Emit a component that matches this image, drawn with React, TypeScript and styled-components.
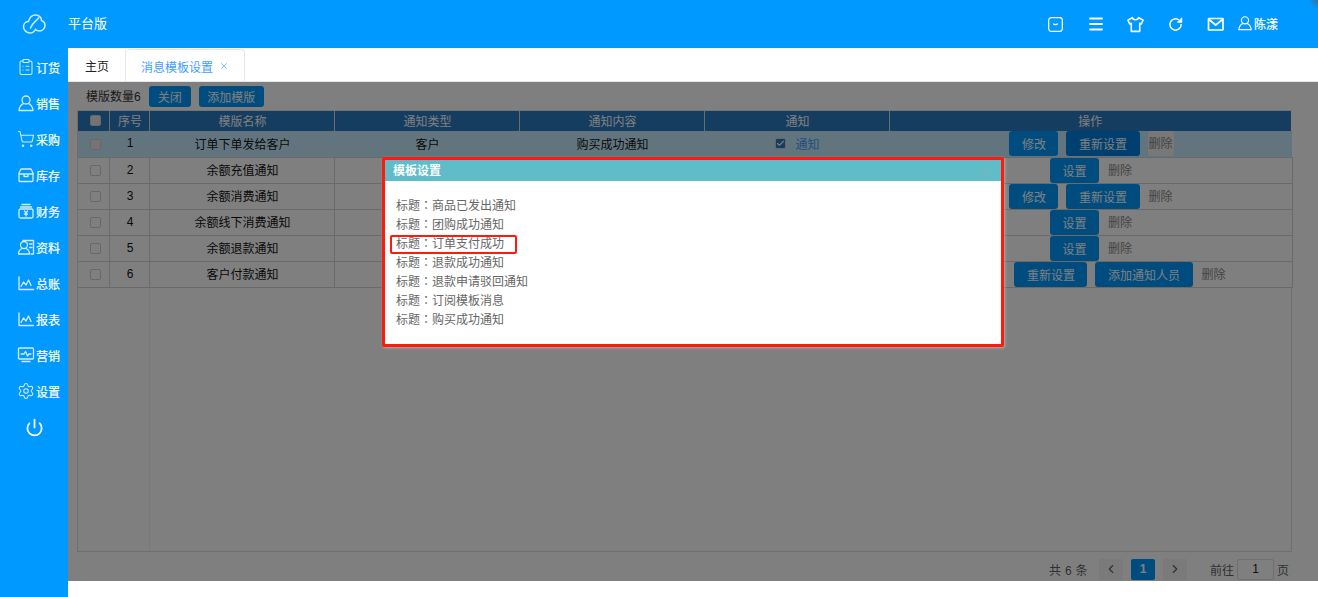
import React from "react";
import styled, {createGlobalStyle} from "styled-components";
import {
    ClipboardList, ShoppingCart, Settings, Power,
    Check, ChevronLeft, ChevronRight, X
} from "lucide-react";

const GlobalStyle = createGlobalStyle`
  html, body {
    margin: 0;
    padding: 0;
    background: white;
    overflow: hidden;
    font-family: "Liberation Sans", "Noto Sans CJK SC", sans-serif;
    font-size: 12px;
  }
  *, *::before, *::after { box-sizing: border-box; }
`

const Page = styled.div`
  display: grid;
  grid-template-columns: 68px 1fr;
  grid-template-rows: 48px 1fr;
  width: 1318px;
  height: 597px;
`

const TopBar = styled.header`
  grid-column: 1 / 3;
  display: flex;
  align-items: center;
  background: radial-gradient(circle at 100% 0, #3a6f96 0, #0099ff 9px);
  color: white;
`

const LogoBox = styled.div`
  width: 68px;
  display: flex;
  justify-content: center;
  padding-right: 1px;
`

const BrandName = styled.div`
  font-size: 13px;
  flex: 1;
  margin-top: -3px;
`

const TopIcons = styled.div`
  display: flex;
  align-items: center;
  margin-right: 40px;
`

const TopIcon = styled.div`
  width: 40px;
  display: flex;
  justify-content: center;
`

const UserName = styled.div`
  display: flex;
  align-items: center;
  gap: 1px;
  margin-left: 1px;
  margin-top: -2px;
  -webkit-text-stroke: 0.2px white;
`

const SideBar = styled.nav`
  background: #0099ff;
  color: white;
  display: flex;
  flex-direction: column;
  padding-top: 1px;
`

const SideItem = styled.div`
  height: 36px;
  display: flex;
  align-items: center;
  gap: 1px;
  padding-left: 17px;
  white-space: nowrap;
  -webkit-text-stroke: 0.2px white;
  svg { flex: none; stroke: #d4ecff; }
`

const PowerItem = styled(SideItem)`
  padding-left: 25px;
  svg { stroke: white; }
`

const Main = styled.main`
  display: flex;
  flex-direction: column;
  min-width: 0;
`

const Tabs = styled.div`
  height: 34px;
  display: flex;
  background: white;
  padding-top: 1px;
  border-bottom: 1px solid #e4e7ed;
`

const Tab = styled.div<{active?: boolean}>`
  display: flex;
  align-items: center;
  gap: 6px;
  padding: 0 ${props => props.active ? "15px" : "16px"} 0 ${props => props.active ? "14px" : "17px"};
  margin-right: 1px;
  color: ${props => props.active ? "#409eff" : "#222"};
  border-right: 1px solid #e4e7ed;
  border-top: ${props => props.active ? "1px solid #e4e7ed" : "0"};
  border-radius: ${props => props.active ? "4px 4px 0 0" : "0"};
  height: 33px;
`

const Content = styled.section`
  position: relative;
  height: 499px;
  padding: 4px 26px 0 9px;
  background: white;
  overflow: hidden;
  display: flex;
  flex-direction: column;
`

const Toolbar = styled.div`
  display: flex;
  align-items: center;
  gap: 8px;
  height: 21px;
  padding-left: 9px;
  margin-bottom: 3px;
  color: #333;
`

const ToolLabel = styled.span`
  margin-top: -2px;
`

const BlueButton = styled.button<{active?: boolean}>`
  height: 25px;
  padding: 0 12.5px;
  border: 0;
  border-radius: 3px;
  background: ${props => props.active ? "#0080e0" : "#0099ff"};
  color: white;
  font: inherit;
  white-space: nowrap;
`

const ToolButton = styled(BlueButton)`
  height: 21px;
  width: ${props => props.children === "关闭" ? "42px" : "65px"};
  padding: 0;
`

const TableFrame = styled.div`
  position: relative;
  height: 443px;
  border: 1px solid #dcdcdc;
  border-top-color: #e8e8e8;
  &::after {
    content: "";
    position: absolute;
    left: 71px;
    top: 0;
    bottom: 0;
    width: 1px;
    background: #f0f0f0;
  }
`

const Table = styled.table`
  position: relative;
  z-index: 1;
  width: 100%;
  table-layout: fixed;
  border-collapse: collapse;
  color: #111;
`

const HeadCell = styled.th`
  height: 20px;
  padding: 0 0 2px 2px;
  background: #2a7abf;
  color: white;
  font-weight: 400;
  border-right: 1px solid #d8d8d8;
  &:first-child { padding-left: 5px; }
  &:last-child { padding-left: 0; border-right: 2px solid white; }
`

const BodyRow = styled.tr<{hover?: boolean}>`
  background: ${props => props.hover ? "#c5ebff" : "white"};
`

const RowCell = styled.td<{hover?: boolean}>`
  height: 26px;
  padding: 0 0 1px 2px;
  text-align: center;
  border-bottom: 1px solid #d4d4d4;
  border-right: 1px solid ${props => props.hover ? "transparent" : "#d4d4d4"};
  &:first-child { padding-left: 5px; }
`

const ActionCell = styled(RowCell)`
  padding: 0 0 0 2px;
`

const Actions = styled.div<{shift?: number}>`
  display: flex;
  align-items: center;
  justify-content: center;
  gap: 8px;
  padding-left: ${props => props.shift || 0}px;
  height: 25px;
`

const DeleteText = styled.span<{hover?: boolean}>`
  height: 25px;
  line-height: 26px;
  padding: 0 1px;
  border-radius: 3px;
  color: #888;
  background: ${props => props.hover ? "#f0f0f0" : "transparent"};
`

const CheckBox = styled.span<{on?: boolean, faded?: boolean}>`
  display: inline-flex;
  align-items: center;
  justify-content: center;
  vertical-align: middle;
  width: 11px;
  height: 11px;
  border: 1px solid #d0d0d0;
  border-radius: 2px;
  background: ${props => props.on ? "#2a7abf" : props.faded ? "#e8e8e8" : "white"};
  color: white;
`

const NotifyLink = styled.span`
  color: #409eff;
  margin-left: 9px;
  vertical-align: middle;
`

const Pager = styled.div`
  display: flex;
  align-items: center;
  height: 24px;
  margin-top: 5px;
  margin-right: -19px;
  padding-left: 972px;
  color: #606266;
`

const PageTotal = styled.span`
  width: 50px;
  letter-spacing: 0.3px;
  white-space: nowrap;
`

const PageBox = styled.div<{active?: boolean}>`
  width: 24px;
  height: 21px;
  margin-right: 8px;
  display: flex;
  align-items: center;
  justify-content: center;
  border-radius: 2px;
  background: ${props => props.active ? "#0099ff" : "#f4f4f5"};
  color: ${props => props.active ? "white" : "#606266"};
  font-weight: ${props => props.active ? 700 : 400};
`

const PageJump = styled.div`
  display: flex;
  align-items: center;
  gap: 3px;
  margin-left: 15px;
  white-space: nowrap;
`

const PageInput = styled.div`
  width: 37px;
  height: 21px;
  border: 1px solid #dcdfe6;
  border-radius: 2px;
  text-align: center;
  line-height: 19px;
  color: #222;
`

const Mask = styled.div`
  position: absolute;
  z-index: 2;
  inset: 0;
  background: rgba(0, 0, 0, 0.5);
`

const Dialog = styled.div`
  position: absolute;
  left: 314px;
  top: 75px;
  width: 622px;
  height: 190px;
  display: flex;
  flex-direction: column;
  background: white;
  border: 3px solid #ff1a0a;
  border-radius: 2px;
  box-shadow: 1px 1px 3px rgba(255, 255, 255, 0.35);
`

const DialogHeader = styled.div`
  height: 21px;
  flex: none;
  display: flex;
  align-items: center;
  justify-content: space-between;
  padding: 0 9px 2px 8px;
  background: #5fbcc8;
  color: white;
  font-weight: 700;
`

const CloseIcon = styled.span`
  display: flex;
  margin-top: 3px;
  color: #9aa9ad;
`

const MessageList = styled.ul`
  list-style: none;
  margin: 0;
  padding: 15px 0 0 11px;
  color: #666;
`

const MessageItem = styled.li<{marked?: boolean}>`
  position: relative;
  height: 19px;
  line-height: 18px;
  ${props => props.marked && `
    &::after {
      content: "";
      position: absolute;
      left: -6px;
      top: 1px;
      width: 127px;
      height: 19px;
      border: 2px solid #ff1a0a;
      border-radius: 2px;
    }
  `}
`

const Colon = styled.span`
  font-family: "Noto Sans CJK TC", sans-serif;
`

const Glyph: React.FC<{size?: number, weight?: number, children: React.ReactNode}> = ({size = 18, weight = 1.3, children}) => (
    <svg width={size} height={size} viewBox="0 0 18 18" fill="none" stroke="currentColor" strokeWidth={weight} strokeLinecap="round" strokeLinejoin="round">
        {children}
    </svg>
)

const LogoIcon: React.FC = () => (
    <svg width="24" height="20" viewBox="0 0 24 20" fill="none" stroke="#d4ecff" strokeWidth="1.5" strokeLinecap="round">
        <path d="M6.500 7.500C7.500 3.500 10.500 1 13.500 1c3.500 0 6 2.500 6 5.500 2.200.8 3.500 2.800 3.500 5 0 3.200-2.800 5.500-5.500 5.500-1.800 0-3-.6-4-1.500-1.200 2.200-3.200 3.500-5.500 3.500-3.400 0-6.500-2.800-6.500-6.300 0-2.700 2-4.900 4.500-5.200z"/>
        <path d="M16.500 4C14 7.500 10 9 8.500 14"/>
    </svg>
)

const BoxSmileIcon: React.FC = () => (
    <svg width="15" height="15" viewBox="0 0 15 15" fill="none" stroke="white" strokeWidth="1.2">
        <rect x="0.700" y="0.700" width="13.600" height="13.600" rx="2.500"/>
        <path d="M5.300 6.500c.6 1.600 3.800 1.600 4.400 0"/>
    </svg>
)

const MenuBarsIcon: React.FC = () => (
    <Glyph weight={1.8}>
        <path d="M3 3.500h12M3 9h12M3 14.500h12"/>
    </Glyph>
)

const ShirtIcon: React.FC = () => (
    <Glyph size={19} weight={1.5}>
        <path d="M6 2.500 1.800 5 3.500 8.500 5 7.800V15.500h8V7.800l1.500.7L16.200 5 12 2.500c-.5 2.600-5.500 2.600-6 0z"/>
    </Glyph>
)

const RefreshIcon: React.FC = () => (
    <Glyph size={17} weight={1.6}>
        <path d="M15 9a6 6 0 1 1-2-4.500L15 6"/>
        <path d="M15.300 2.500V6.300h-3.800" fill="white"/>
    </Glyph>
)

const EnvelopeIcon: React.FC = () => (
    <Glyph weight={1.7}>
        <rect x="1.500" y="3.500" width="14.500" height="11.500" rx="0.500"/>
        <path d="M2 4.500 8.700 10l6.800-5.500"/>
    </Glyph>
)

const PersonIcon: React.FC<{size?: number}> = ({size = 18}) => (
    <Glyph size={size} weight={1.3}>
        <circle cx="9" cy="6" r="4"/>
        <path d="M2 16.500c0-3.800 2.800-6.300 4.500-6.800M16 16.500c0-3.800-2.800-6.300-4.500-6.800M2 16.500h14"/>
    </Glyph>
)

const StockIcon: React.FC = () => (
    <Glyph>
        <path d="M4 3h10l2 4v7.500a1 1 0 0 1-1 1H3a1 1 0 0 1-1-1V7z"/>
        <path d="M2 8h14M7 8v2.500h4V8"/>
    </Glyph>
)

const FinanceIcon: React.FC = () => (
    <Glyph>
        <path d="M5 2.500h8M3.500 5h11"/>
        <rect x="2" y="7" width="14" height="9" rx="1.500"/>
        <path d="M7.500 9 9 10.800 10.500 9M9 10.800V14M7.500 12h3"/>
    </Glyph>
)

const ProfileIcon: React.FC = () => (
    <Glyph>
        <circle cx="7" cy="7" r="3.500"/>
        <path d="M1.500 16c0-3 2-4.800 3.500-5.500M12.500 16c0-3-2-4.800-3.500-5.500M1.500 16h11"/>
        <path d="M6 2.500h10.500V16H14M12.500 6h2.500M12.500 9.500h2.500"/>
    </Glyph>
)

const ChartIcon: React.FC = () => (
    <Glyph>
        <path d="M2 3v12.500h14.500"/>
        <path d="M4 12.500 6.500 8 9 11l2.500-5 2.500 5.500"/>
    </Glyph>
)

const MonitorIcon: React.FC = () => (
    <Glyph>
        <rect x="1.500" y="2" width="15" height="11" rx="1"/>
        <path d="M4 8h3l1.500-2.500L10.500 10 12 8h2M5 15.500h8"/>
    </Glyph>
)

const sideItems = [
    {name: "订货", icon: <ClipboardList size={18} strokeWidth={1.4}/>},
    {name: "销售", icon: <PersonIcon/>},
    {name: "采购", icon: <ShoppingCart size={18} strokeWidth={1.4}/>},
    {name: "库存", icon: <StockIcon/>},
    {name: "财务", icon: <FinanceIcon/>},
    {name: "资料", icon: <ProfileIcon/>},
    {name: "总账", icon: <ChartIcon/>},
    {name: "报表", icon: <ChartIcon/>},
    {name: "营销", icon: <MonitorIcon/>},
    {name: "设置", icon: <Settings size={18} strokeWidth={1.4}/>},
]

const rows = [
    {name: "订单下单发给客户", buttons: ["修改", "重新设置"]},
    {name: "余额充值通知", buttons: ["设置"]},
    {name: "余额消费通知", buttons: ["修改", "重新设置"]},
    {name: "余额线下消费通知", buttons: ["设置"]},
    {name: "余额退款通知", buttons: ["设置"]},
    {name: "客户付款通知", buttons: ["重新设置", "添加通知人员"], shift: 58},
]

const messages = ["商品已发出通知", "团购成功通知", "订单支付成功", "退款成功通知", "退款申请驳回通知", "订阅模板消息", "购买成功通知"]

const columns = [31, 40, 185, 185, 185, 185, 403]

const App: React.FC = () => {
    return (
        <Page>
            <GlobalStyle/>
            <TopBar>
                <LogoBox><LogoIcon/></LogoBox>
                <BrandName>平台版</BrandName>
                <TopIcons>
                    <TopIcon><BoxSmileIcon/></TopIcon>
                    <TopIcon><MenuBarsIcon/></TopIcon>
                    <TopIcon><ShirtIcon/></TopIcon>
                    <TopIcon><RefreshIcon/></TopIcon>
                    <TopIcon><EnvelopeIcon/></TopIcon>
                    <UserName><PersonIcon size={16}/>陈漾</UserName>
                </TopIcons>
            </TopBar>
            <SideBar>
                {sideItems.map(item => (
                    <SideItem key={item.name}>{item.icon}{item.name}</SideItem>
                ))}
                <PowerItem><Power size={19} strokeWidth={2.2}/></PowerItem>
            </SideBar>
            <Main>
                <Tabs>
                    <Tab>主页</Tab>
                    <Tab active>消息模板设置<X size={10} strokeWidth={1.5}/></Tab>
                </Tabs>
                <Content>
                    <Toolbar>
                        <ToolLabel>模版数量6</ToolLabel>
                        <ToolButton>关闭</ToolButton>
                        <ToolButton>添加模版</ToolButton>
                    </Toolbar>
                    <TableFrame>
                        <Table>
                            <colgroup>
                                {columns.map((width, index) => <col key={index} style={{width}}/>)}
                            </colgroup>
                            <thead>
                                <tr>
                                    <HeadCell><CheckBox faded/></HeadCell>
                                    <HeadCell>序号</HeadCell>
                                    <HeadCell>模版名称</HeadCell>
                                    <HeadCell>通知类型</HeadCell>
                                    <HeadCell>通知内容</HeadCell>
                                    <HeadCell>通知</HeadCell>
                                    <HeadCell>操作</HeadCell>
                                </tr>
                            </thead>
                            <tbody>
                                {rows.map((row, index) => {
                                    const hover = index === 0;
                                    return (
                                        <BodyRow key={row.name} hover={hover}>
                                            <RowCell hover={hover}><CheckBox faded={hover}/></RowCell>
                                            <RowCell hover={hover}>{index + 1}</RowCell>
                                            <RowCell hover={hover}>{row.name}</RowCell>
                                            <RowCell hover={hover}>客户</RowCell>
                                            <RowCell hover={hover}>购买成功通知</RowCell>
                                            <RowCell hover={hover}>
                                                <CheckBox on><Check size={9} strokeWidth={3}/></CheckBox>
                                                <NotifyLink>通知</NotifyLink>
                                            </RowCell>
                                            <ActionCell hover={hover}>
                                                <Actions shift={row.shift}>
                                                    {row.buttons.map(label => (
                                                        <BlueButton key={label} active={hover && label === "重新设置"}>{label}</BlueButton>
                                                    ))}
                                                    <DeleteText hover={hover}>删除</DeleteText>
                                                </Actions>
                                            </ActionCell>
                                        </BodyRow>
                                    )
                                })}
                            </tbody>
                        </Table>
                    </TableFrame>
                    <Pager>
                        <PageTotal>共 6 条</PageTotal>
                        <PageBox><ChevronLeft size={14}/></PageBox>
                        <PageBox active>1</PageBox>
                        <PageBox><ChevronRight size={14}/></PageBox>
                        <PageJump>前往<PageInput>1</PageInput>页</PageJump>
                    </Pager>
                    <Mask>
                        <Dialog>
                            <DialogHeader>
                                模板设置
                                <CloseIcon><X size={13} strokeWidth={1.2}/></CloseIcon>
                            </DialogHeader>
                            <MessageList>
                                {messages.map(message => (
                                    <MessageItem key={message} marked={message === "订单支付成功"}>
                                        标题<Colon>：</Colon>{message}
                                    </MessageItem>
                                ))}
                            </MessageList>
                        </Dialog>
                    </Mask>
                </Content>
            </Main>
        </Page>
    )
}

export default App;
